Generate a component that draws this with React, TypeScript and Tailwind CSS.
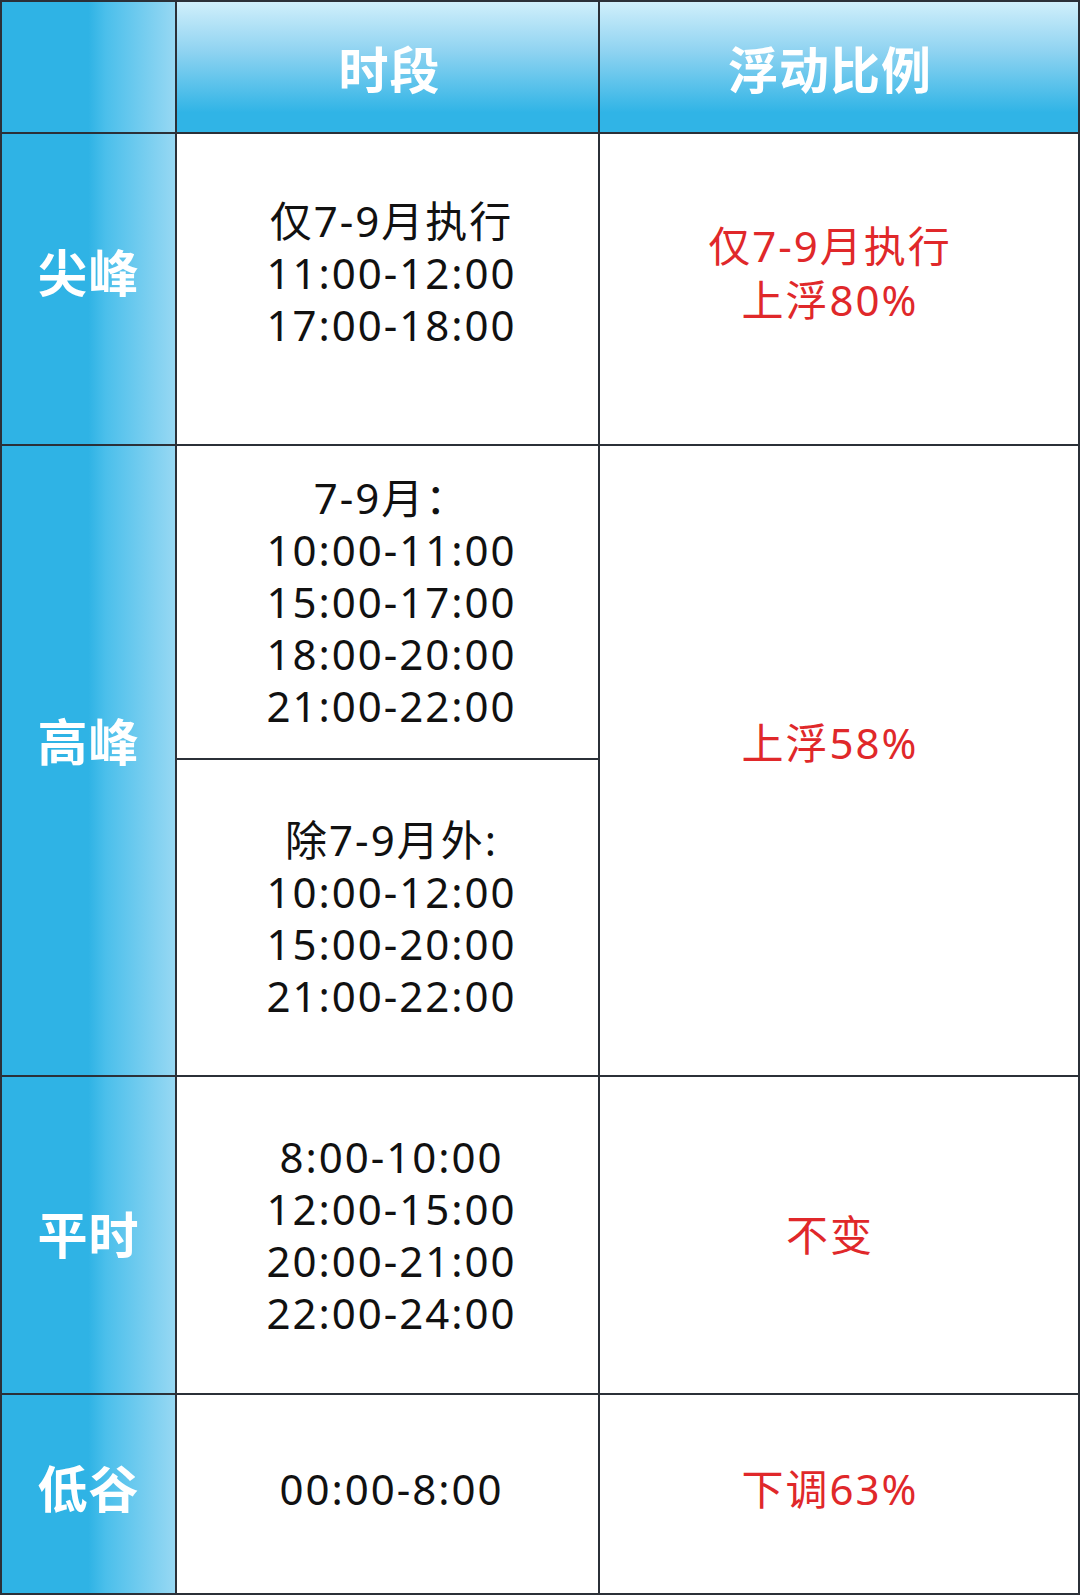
import React from "react";

const side =
  "bg-[linear-gradient(to_right,#2fb3e5_0%,#2fb3e5_50%,#4bbfeb_60%,#97d8f3_100%)] flex items-center justify-center text-white font-bold text-[50px] tracking-[1px]";
const head =
  "bg-[linear-gradient(to_bottom,#d0effb_0%,#8fd3f1_38%,#30b4e6_85%,#30b4e6_100%)] flex items-center justify-center text-white font-bold text-[50px] tracking-[1px]";
const cell =
  "bg-white flex flex-col items-center justify-center pl-[8px] text-[42px] leading-[52px] tracking-[2px] text-[#111]";
const red =
  "bg-white flex flex-col items-center justify-center pr-[18px] text-[42px] leading-[54px] tracking-[2px] text-[#e0282a]";

export default function App() {
  return (
    <div
      className="w-[1080px] h-[1595px] bg-[#2b3038] p-[2px] grid gap-[2px] grid-cols-[173px_421px_478px] grid-rows-[130px_310px_312px_315px_316px_198px]"
      style={{ fontFamily: '"Noto Sans", "Noto Sans CJK SC", sans-serif' }}
    >
      <div className={side}></div>
      <div className={head + " pl-[4px]"} style={{ fontFamily: '"Noto Sans CJK SC", sans-serif' }}>时段</div>
      <div className={head + " pr-[18px]"} style={{ fontFamily: '"Noto Sans CJK SC", sans-serif' }}>浮动比例</div>

      <div className={side + " pb-[32px]"}>尖峰</div>
      <div className={cell + " pb-[32px]"}>
        <div>仅7-9月执行</div>
        <div>11:00-12:00</div>
        <div>17:00-18:00</div>
      </div>
      <div className={red + " pb-[32px]"}>
        <div>仅7-9月执行</div>
        <div>上浮80%</div>
      </div>

      <div className={side + " row-span-2 pb-[36px]"}>高峰</div>
      <div className={cell}>
        <div>7-9月：</div>
        <div>10:00-11:00</div>
        <div>15:00-17:00</div>
        <div>18:00-20:00</div>
        <div>21:00-22:00</div>
      </div>
      <div className={red + " row-span-2 pb-[36px]"}>
        <div>上浮58%</div>
      </div>
      <div className={cell}>
        <div>除7-9月外:</div>
        <div>10:00-12:00</div>
        <div>15:00-20:00</div>
        <div>21:00-22:00</div>
      </div>

      <div className={side}>平时</div>
      <div className={cell}>
        <div>8:00-10:00</div>
        <div>12:00-15:00</div>
        <div>20:00-21:00</div>
        <div>22:00-24:00</div>
      </div>
      <div className={red}>
        <div>不变</div>
      </div>

      <div className={side + " pb-[10px]"}>低谷</div>
      <div className={cell + " pb-[10px]"}>
        <div>00:00-8:00</div>
      </div>
      <div className={red + " pb-[10px]"}>
        <div>下调63%</div>
      </div>
    </div>
  );
}
